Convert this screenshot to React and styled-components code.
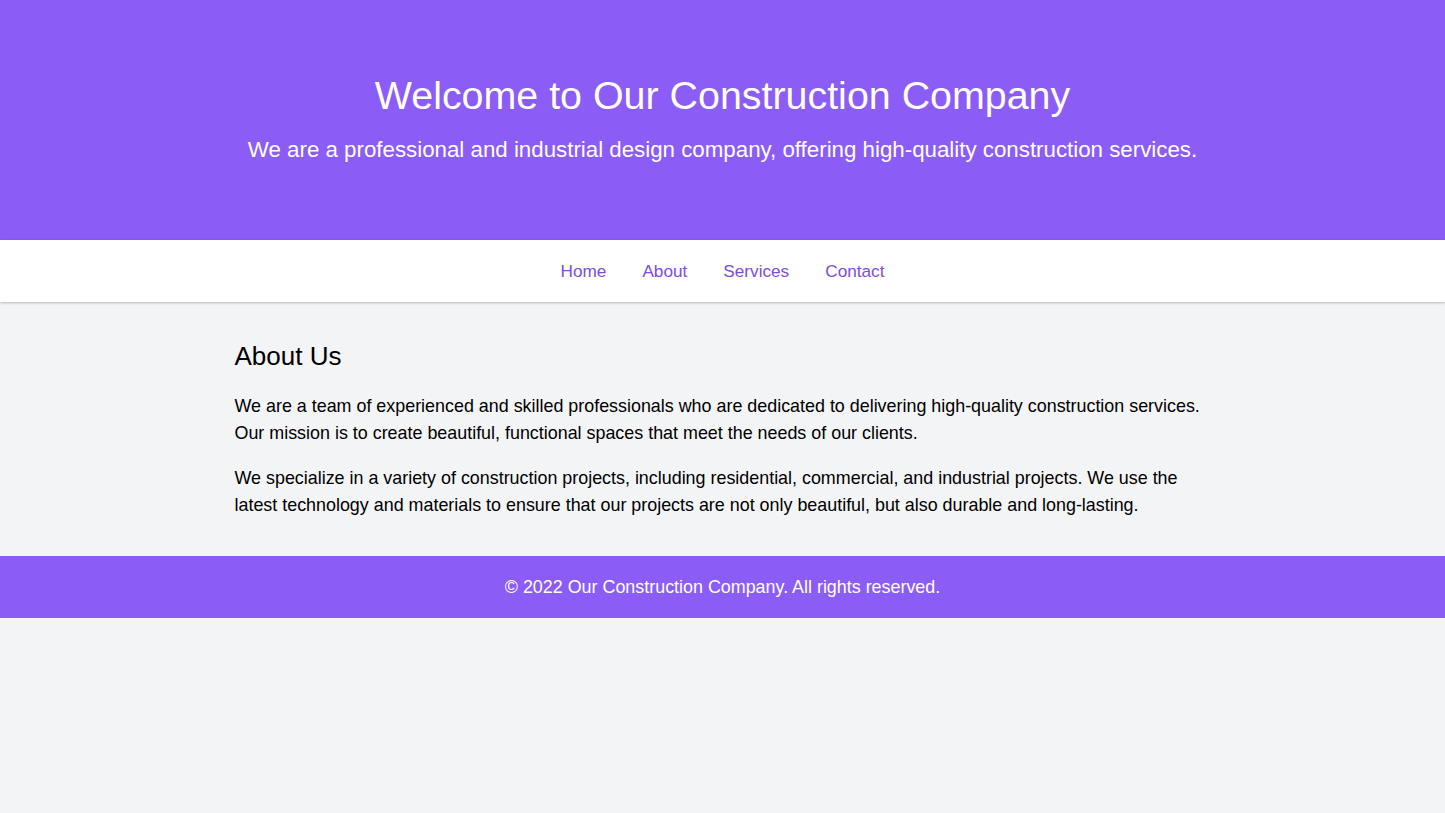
import React from 'react'
import styled, { createGlobalStyle } from 'styled-components'

const Global = createGlobalStyle`
  html, body { margin: 0; padding: 0; }
  body {
    background: #f3f4f6;
    font-family: "Liberation Sans", Arial, sans-serif;
    color: #000;
  }
  * { box-sizing: border-box; }
`

const Header = styled.header`
  background: #8b5cf6;
  color: #fff;
  height: 240px;
  padding-top: 70px;
  text-align: center;
`

const Title = styled.h1`
  margin: 0;
  font-size: 39.4px;
  font-weight: 400;
  line-height: 50px;
`

const Subtitle = styled.p`
  margin: 16px 0 0;
  font-size: 22.3px;
  line-height: 28px;
`

const Nav = styled.nav`
  background: #fff;
  height: 62px;
  display: flex;
  justify-content: center;
  align-items: center;
  gap: 36px;
  box-shadow: 0 1px 3px rgba(0, 0, 0, 0.15), 0 1px 2px rgba(0, 0, 0, 0.1);
  position: relative;
`

const NavLink = styled.a`
  color: #7c4ddb;
  font-size: 17.2px;
  text-decoration: none;
`

const Main = styled.main`
  max-width: 1024px;
  margin: 0 auto;
  padding: 38px 24px 19px;
`

const Heading = styled.h2`
  margin: 0 0 21px;
  font-size: 26px;
  font-weight: 400;
  line-height: 32px;
`

const Para = styled.p`
  margin: 0 0 18px;
  font-size: 17.9px;
  line-height: 27px;
`

const Footer = styled.footer`
  background: #8b5cf6;
  color: #fff;
  height: 62px;
  display: flex;
  align-items: center;
  justify-content: center;
  font-size: 17.9px;
`

export default function App() {
  return (
    <>
      <Global />
      <Header>
        <Title>Welcome to Our Construction Company</Title>
        <Subtitle>We are a professional and industrial design company, offering high-quality construction services.</Subtitle>
      </Header>
      <Nav>
        <NavLink href="#">Home</NavLink>
        <NavLink href="#">About</NavLink>
        <NavLink href="#">Services</NavLink>
        <NavLink href="#">Contact</NavLink>
      </Nav>
      <Main>
        <Heading>About Us</Heading>
        <Para>
          We are a team of experienced and skilled professionals who are dedicated to delivering high-quality construction services. Our mission is to create beautiful, functional spaces that meet the needs of our clients.
        </Para>
        <Para>
          We specialize in a variety of construction projects, including residential, commercial, and industrial projects. We use the latest technology and materials to ensure that our projects are not only beautiful, but also durable and long-lasting.
        </Para>
      </Main>
      <Footer>© 2022 Our Construction Company. All rights reserved.</Footer>
    </>
  )
}
